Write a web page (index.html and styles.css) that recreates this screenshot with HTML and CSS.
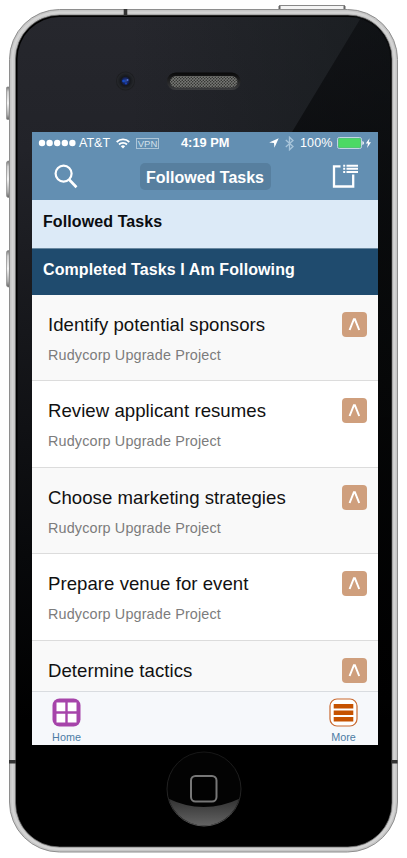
FILE: index.html
```html
<!DOCTYPE html>
<html lang="en">
<head>
<meta charset="utf-8">
<title>Followed Tasks</title>
<link rel="stylesheet" href="styles.css">
</head>
<body>
<div class="phone">
  <svg class="shell" width="407" height="858" viewBox="0 0 407 858" aria-hidden="true">
    <defs>
      <linearGradient id="glass" x1="0" y1="0" x2="0" y2="1"><stop offset="0" stop-color="#26272d"/><stop offset=".16" stop-color="#222329"/><stop offset=".38" stop-color="#16171b"/><stop offset=".65" stop-color="#08090b"/><stop offset=".85" stop-color="#000"/></linearGradient>
      <linearGradient id="shade" x1="0" y1="0" x2="1" y2="0"><stop offset=".3" stop-color="#14191b" stop-opacity="0"/><stop offset="1" stop-color="#14191b" stop-opacity=".65"/></linearGradient>
      <linearGradient id="edge" x1="0" y1="0" x2="0" y2="1"><stop offset="0" stop-color="#0a0b0e" stop-opacity=".6"/><stop offset=".3" stop-color="#060708" stop-opacity=".8"/><stop offset="1" stop-color="#000"/></linearGradient>
      <linearGradient id="key" x1="0" y1="0" x2="0" y2="1"><stop offset="0" stop-color="#777"/><stop offset=".15" stop-color="#ccc"/><stop offset=".5" stop-color="#f4f4f4"/><stop offset=".85" stop-color="#aaa"/><stop offset="1" stop-color="#666"/></linearGradient>
      <linearGradient id="gloss" x1="0" y1="0" x2="0" y2="1"><stop offset="0" stop-color="#303030"/><stop offset="1" stop-color="#666"/></linearGradient>
      <linearGradient id="ring" x1="0" y1="0" x2="0" y2="1"><stop offset="0" stop-color="#161616"/><stop offset=".6" stop-color="#242424"/><stop offset="1" stop-color="#555"/></linearGradient>
      <linearGradient id="slot" x1="0" y1="0" x2="0" y2="1"><stop offset="0" stop-color="#090909"/><stop offset="1" stop-color="#3c3d3f"/></linearGradient>
      <radialGradient id="lens"><stop offset="0" stop-color="#2b4a9d"/><stop offset=".35" stop-color="#14235f"/><stop offset=".55" stop-color="#16181c"/><stop offset="1" stop-color="#26282c"/></radialGradient>
      <pattern id="mesh" width="3" height="3" patternUnits="userSpaceOnUse"><rect width="3" height="3" fill="#777875"/><circle cx=".75" cy=".75" r=".75" fill="#262724"/><circle cx="2.25" cy="2.25" r=".75" fill="#262724"/></pattern>
      <clipPath id="face"><rect x="16.5" y="16" width="374.5" height="830" rx="43"/></clipPath>
      <clipPath id="button"><circle cx="204" cy="789" r="36.5"/></clipPath>
    </defs>
    <rect x="279.5" y="5.5" width="65" height="8" fill="#f5f5f5" stroke="#888"/>
    <path d="M279.5 6v4M344.5 6v4" stroke="#666" stroke-width="2"/>
    <rect x="6.5" y="87" width="5" height="32.5" rx="1" fill="url(#key)" stroke="#888" stroke-width=".7"/>
    <rect x="6.5" y="161" width="5" height="36.5" rx="2" fill="url(#key)" stroke="#888" stroke-width=".7"/>
    <rect x="6.5" y="250.5" width="5" height="36.5" rx="2" fill="url(#key)" stroke="#888" stroke-width=".7"/>
    <rect x="9.5" y="9.5" width="388" height="842.5" rx="50" fill="#c6c6c6" stroke="#8e8e8e"/>
    <rect x="12.5" y="12.5" width="382" height="836.5" rx="47" fill="none" stroke="#d4d4d4" stroke-width="2"/>
    <rect x="15.5" y="15" width="376.5" height="832" rx="44" fill="#000" stroke="#737373" stroke-width=".7"/>
    <path d="M125.5 9v7M9 761.7h7M391.5 761.7h6" stroke="#333" stroke-width="3.6"/>
    <g clip-path="url(#face)">
      <rect x="17.5" y="17" width="372.5" height="828" rx="42" fill="url(#glass)"/>
      <rect x="17.5" y="17" width="372.5" height="400" fill="url(#shade)"/>
      <path d="M362 16 292 132H378V700H391V16Z" fill="url(#edge)"/>
    </g>
    <circle cx="125.5" cy="81" r="9.5" fill="#1d1e21"/>
    <circle cx="125.5" cy="81" r="8.5" fill="url(#lens)"/>
    <circle cx="123.5" cy="81" r="1.3" fill="#164cc5"/><circle cx="127.5" cy="80" r="1" fill="#5270c8"/><circle cx="126" cy="83.5" r="1" fill="#1742ba"/>
    <rect x="167" y="72.5" width="73.5" height="17.5" rx="8.7" fill="url(#slot)"/>
    <rect x="170" y="76" width="67.5" height="11.5" rx="5.7" fill="url(#mesh)"/>
    <circle cx="204" cy="789" r="37" fill="#030303" stroke="url(#ring)"/>
    <path d="M167 798q36.5 18 74 0v29h-74z" fill="url(#gloss)" clip-path="url(#button)"/>
    <rect x="191" y="776" width="25.5" height="25.5" rx="4.5" fill="#020202" stroke="#777" stroke-width="2"/>
  </svg>

  <main class="screen">
    <header class="header">
      <div class="status">
        <svg class="signal" width="38" height="8" viewBox="0 0 38 8" fill="#fff"><circle cx="4" cy="4" r="3.2"/><circle cx="11.6" cy="4" r="3.2"/><circle cx="19.2" cy="4" r="3.2"/><circle cx="26.8" cy="4" r="3.2"/><circle cx="34.4" cy="4" r="3.2"/></svg>
        <span class="carrier">AT&amp;T</span>
        <svg class="wifi" width="14" height="11" viewBox="0 0 14 11" fill="none" stroke="#fff" stroke-width="1.8"><path d="M.7 4a9 9 0 0 1 12.6 0M3 6.5a5.7 5.7 0 0 1 8 0"/><path d="M7 10.5 4.8 8.2a3.3 3.3 0 0 1 4.4 0z" fill="#fff" stroke="none"/></svg>
        <span class="vpn">VPN</span>
        <span class="clock">4:19 PM</span>
        <svg class="arrow" width="10" height="10" viewBox="0 0 10 10"><path d="M9.7.3 5.4 9.7 5 5 .2 4.5z" fill="#fff"/></svg>
        <svg class="bluetooth" width="9" height="15" viewBox="0 0 9 15" fill="none" stroke="#a8c5da" stroke-width="1.3"><path d="M.8 4 8 10.5 4.5 13.8V1.2L8 4.5.8 11"/></svg>
        <span class="percent">100%</span>
        <svg class="battery" width="35" height="12" viewBox="0 0 35 12"><rect x=".5" y=".5" width="24" height="11" rx="1.8" fill="none" stroke="#c3d5e2"/><rect x="1.3" y="1.3" width="22.4" height="9.4" rx=".8" fill="#4cd964"/><path d="M25.3 4q1.8.3 1.8 2t-1.8 2z" fill="#e8f0f5"/><path d="M32.6 1.2 28.8 6.6H31L30 11l4-5.7h-2.3z" fill="#fff"/></svg>
      </div>
      <nav class="nav">
        <svg class="search" width="24" height="25" viewBox="0 0 24 25" fill="none" stroke="#fff"><circle cx="9.6" cy="9.6" r="8" stroke-width="2.2"/><path d="m15.3 15.8 7.2 7.4" stroke-width="2.7"/></svg>
        <h1 class="title">Followed Tasks</h1>
        <svg class="compose" width="26" height="24" viewBox="0 0 26 24" fill="none" stroke="#fff"><path d="M8.5 2.3H2v20.2h19.2V10.5" stroke-width="2.3"/><path d="M11.2 1.7h2M11.2 4.8h2M11.2 7.9h2M14.5 1.7H26M14.5 4.8H26M14.5 7.9H26" stroke-width="2"/></svg>
      </nav>
    </header>
    <h2 class="band band-light">Followed Tasks</h2>
    <h2 class="band band-dark">Completed Tasks I Am Following</h2>
    <ul class="tasks">
      <li class="task"><div><p class="name">Identify potential sponsors</p><p class="project">Rudycorp Upgrade Project</p></div><svg class="badge" viewBox="0 0 25 25"><path d="m7.6 18 4.3-10.8h1L17.2 18"/></svg></li>
      <li class="task"><div><p class="name">Review applicant resumes</p><p class="project">Rudycorp Upgrade Project</p></div><svg class="badge" viewBox="0 0 25 25"><path d="m7.6 18 4.3-10.8h1L17.2 18"/></svg></li>
      <li class="task"><div><p class="name">Choose marketing strategies</p><p class="project">Rudycorp Upgrade Project</p></div><svg class="badge" viewBox="0 0 25 25"><path d="m7.6 18 4.3-10.8h1L17.2 18"/></svg></li>
      <li class="task"><div><p class="name">Prepare venue for event</p><p class="project">Rudycorp Upgrade Project</p></div><svg class="badge" viewBox="0 0 25 25"><path d="m7.6 18 4.3-10.8h1L17.2 18"/></svg></li>
      <li class="task"><div><p class="name">Determine tactics</p></div><svg class="badge" viewBox="0 0 25 25"><path d="m7.6 18 4.3-10.8h1L17.2 18"/></svg></li>
    </ul>
    <footer class="tabs">
      <a class="tab"><svg width="29" height="29" viewBox="0 0 29 29"><rect x=".5" y=".5" width="28" height="28" rx="7" fill="#a644aa"/><path d="M4.5 4.5h8.8v8.8H4.5zM15.7 4.5h8.8v8.8h-8.8zM4.5 15.7h8.8v8.8H4.5zM15.7 15.7h8.8v8.8h-8.8z" fill="#fff"/></svg><span>Home</span></a>
      <a class="tab"><svg width="29" height="29" viewBox="0 0 29 29"><rect x="1" y="1" width="27" height="27" rx="7" fill="#fff" stroke="#c9692f" stroke-width="1.2"/><path d="M4.7 8.3h19.6M4.7 14.7h19.6M4.7 21.2h19.6" stroke="#c65200" stroke-width="4.5"/></svg><span>More</span></a>
    </footer>
  </main>
</div>
</body>
</html>
```

FILE: styles.css
```css
* { box-sizing: border-box; }
body, h1, h2, p, ul { margin: 0; padding: 0; }
body { background: #fff; font-family: "Liberation Sans", Arial, sans-serif; overflow: hidden; }
svg { display: block; flex: none; }
.phone { position: relative; width: 407px; height: 858px; padding: 132px 29px 113px 32px; }
.shell { position: absolute; inset: 0; }
.screen { position: relative; display: flex; flex-direction: column; width: 346px; height: 613px; overflow: hidden; background: #fff; }
.header { flex: none; height: 68px; background: #638fb2; color: #fff; }
.status { display: flex; align-items: center; height: 22px; padding-left: 6px; font-size: 12.5px; line-height: 22px; white-space: nowrap; }
.carrier { width: 32px; margin-left: 3px; }
.wifi { margin-left: 5px; }
.vpn { margin-left: 6px; width: 23px; height: 11px; border: 1px solid #adc5d7; color: #d3e0e9; font-size: 9.5px; line-height: 10px; text-align: center; }
.clock { width: 51px; margin-left: 22px; font-weight: bold; font-size: 12.8px; }
.arrow { margin-left: 37px; }
.bluetooth { margin-left: 6px; }
.percent { width: 33px; margin-left: 6px; letter-spacing: .15px; }
.battery { margin-left: 4px; }
.nav { display: flex; align-items: center; justify-content: space-between; height: 44px; padding: 0 20px 0 22px; }
.title { width: 131px; height: 27px; border-radius: 5px; background: #577f9f; font-size: 16px; line-height: 29px; text-align: center; white-space: nowrap; }
.band { flex: none; height: 47.5px; padding-left: 11px; font-size: 16px; line-height: 42px; letter-spacing: .1px; white-space: nowrap; }
.band-light { background: #dceaf7; color: #0b0d10; line-height: 44px; }
.band-dark { background: #1f4b6e; border-top: 1px solid #6988a0; color: #fff; }
.tasks { flex: 1; min-height: 0; overflow: hidden; list-style: none; }
.task { display: flex; justify-content: space-between; height: 86.4px; padding: 17px 11px 0 16px; border-bottom: 1px solid #dcdcdc; background: #f9f9f9; }
.task:nth-child(even) { background: #fff; }
.name { color: #111; font-size: 18.6px; line-height: 26px; letter-spacing: .04px; white-space: nowrap; }
.project { margin-top: 7px; color: #7c7c7c; font-size: 14.4px; line-height: 20px; letter-spacing: .14px; white-space: nowrap; }
.badge { width: 25px; height: 25px; border-radius: 4px; background: #cf9f7d; fill: none; stroke: #fff; stroke-width: 2; }
.tabs { flex: none; display: flex; justify-content: space-between; height: 54px; padding: 6px 20px 0; border-top: 1px solid #d9dce0; background: #f6f8fb; }
.tab { display: flex; flex-direction: column; align-items: center; color: #4c7ca5; font-size: 10.8px; line-height: 14px; }
.tab span { margin-top: 3px; }
```
